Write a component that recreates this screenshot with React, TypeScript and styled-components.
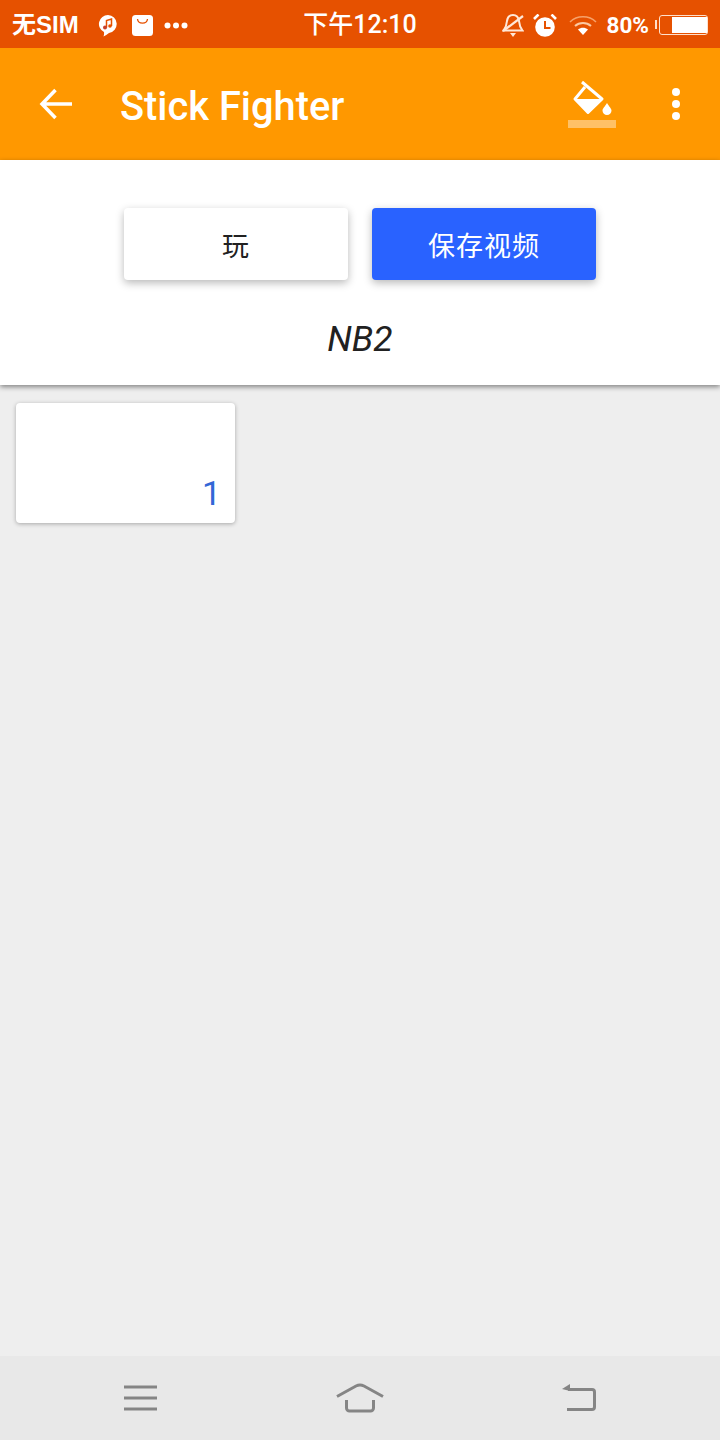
import React from 'react'
import styled, { createGlobalStyle } from 'styled-components'

const Global = createGlobalStyle`
  html, body { margin: 0; padding: 0; }
  body { font-family: Roboto, "Noto Sans CJK SC", sans-serif; }
  * { box-sizing: border-box; }
`

const Page = styled.div`
  width: 720px;
  height: 1440px;
  display: flex;
  flex-direction: column;
  background-color: #eeeeee;
`

const StatusBar = styled.div`
  height: 48px;
  flex: none;
  background-color: #e65100;
  color: #fff;
  display: grid;
  grid-template-columns: 1fr auto 1fr;
  align-items: center;
  padding: 2px 12px 0;
`

const StatusGroup = styled.div<{ $end?: boolean }>`
  display: flex;
  align-items: center;
  justify-content: ${p => (p.$end ? 'flex-end' : 'flex-start')};
`

const Carrier = styled.span`
  font-family: "Liberation Sans", "Noto Sans CJK SC", sans-serif;
  font-size: 24px;
  font-weight: 700;
  line-height: 46px;
  white-space: nowrap;
`

const Percent = styled.span`
  font-size: 22.5px;
  font-weight: 700;
  line-height: 46px;
  margin-left: 10px;
  white-space: nowrap;
`

const Clock = styled.span`
  font-size: 25px;
  font-weight: 500;
  line-height: 46px;
  white-space: nowrap;
`

const StatusIcon = styled.svg<{ $left: number }>`
  display: block;
  flex: none;
  margin-left: ${p => p.$left}px;
`

const Battery = styled.div`
  width: 49px;
  height: 20px;
  margin-left: 10px;
  flex: none;
  border: 1.5px solid #ffe0cc;
  border-radius: 3px;
  padding: 1px 0 1px 12px;
  position: relative;
  &:before {
    content: '';
    position: absolute;
    left: -5px;
    top: 4px;
    width: 2px;
    height: 9px;
    background: #ffe0cc;
  }
`

const BatteryFill = styled.div`
  height: 100%;
  background: #fff;
`

const AppBar = styled.div`
  height: 112px;
  flex: none;
  background-color: #ff9800;
  display: flex;
  align-items: center;
  padding-left: 38px;
  padding-right: 38px;
`

const Title = styled.h1`
  margin: 6px 0 0 46px;
  flex: 1;
  color: #fff;
  font-size: 39.8px;
  font-weight: 500;
  line-height: 1;
`

const BarIcon = styled.svg<{ $left?: number }>`
  display: block;
  flex: none;
  margin-left: ${p => p.$left ?? 0}px;
`

const Header = styled.div`
  height: 225px;
  flex: none;
  background: #fff;
  padding-top: 48px;
  display: flex;
  flex-direction: column;
  align-items: center;
  box-shadow: 0 2px 5px rgba(0, 0, 0, 0.45);
  position: relative;
`

const Buttons = styled.div`
  display: flex;
  gap: 24px;
`

const Button = styled.div<{ $primary?: boolean }>`
  width: 224px;
  height: 72px;
  border-radius: 4px;
  display: flex;
  align-items: center;
  justify-content: center;
  background: ${p => (p.$primary ? '#2962ff' : '#fff')};
  color: ${p => (p.$primary ? '#fff' : '#212121')};
  font-size: 27px;
  letter-spacing: 1px;
  box-shadow: 0 3px 8px rgba(0, 0, 0, 0.28);
`

const Name = styled.div`
  margin-top: 38px;
  font-size: 35.5px;
  font-style: italic;
  line-height: 42px;
  color: #212121;
`

const Grid = styled.div`
  flex: 1;
  padding: 18px 16px;
`

const Card = styled.div`
  width: 219px;
  height: 120px;
  background: #fff;
  border-radius: 4px;
  box-shadow: 0 1px 4px rgba(0, 0, 0, 0.3);
  display: flex;
  align-items: flex-end;
  justify-content: flex-end;
  padding: 0 14px 10px;
`

const CardNumber = styled.span`
  color: #3367d6;
  font-size: 34px;
  line-height: 40px;
`

const NavBar = styled.div`
  height: 84px;
  flex: none;
  background: #e8e8e8;
  display: grid;
  grid-template-columns: repeat(3, 1fr);
  padding: 0 124px;
  align-items: center;
`

const NavSlot = styled.div<{ $align: string }>`
  display: flex;
  justify-content: ${p => p.$align};
`

export default function App() {
  return (
    <Page>
      <Global />
      <StatusBar>
        <StatusGroup>
          <Carrier>无SIM</Carrier>
          <StatusIcon $left={19} width="20" height="23" viewBox="0 0 20 23">
            <path d="M10 1a9 9 0 0 1 1 17.900C9 20.500 7.500 21.500 5.500 22.500c.5-1.500.7-3 .5-4.400A9 9 0 0 1 10 1z" fill="#fff" />
            <path d="M8.500 13.500V6.500l5-1.500v7" fill="none" stroke="#e65100" strokeWidth="1.500" />
            <circle cx="7" cy="13.500" r="2" fill="#c8402a" />
            <circle cx="12" cy="12" r="1.800" fill="#e65100" />
          </StatusIcon>
          <StatusIcon $left={14} width="21" height="21" viewBox="0 0 21 21">
            <rect width="21" height="21" rx="3.500" fill="#fff" />
            <path d="M5.500 4c.5 5.500 9.500 5.500 10 0" fill="none" stroke="#e65100" strokeWidth="1.300" />
          </StatusIcon>
          <StatusIcon $left={11} width="24" height="7" viewBox="0 0 24 7">
            <circle cx="3.500" cy="3.500" r="3" fill="#fff" />
            <circle cx="12" cy="3.500" r="3" fill="#fff" />
            <circle cx="20.500" cy="3.500" r="3" fill="#fff" />
          </StatusIcon>
        </StatusGroup>
        <Clock>下午12:10</Clock>
        <StatusGroup $end>
          <StatusIcon $left={0} width="22" height="24" viewBox="0 0 22 24">
            <path d="M11 2c3.500 0 5.500 2.500 6 6 .3 3.500 1.500 7 3.500 9.500h-19C3.500 15 4.700 11.500 5 8c.5-3.500 2.500-6 6-6z" fill="none" stroke="#ffe8d8" strokeWidth="2" />
            <path d="M8 20h6l-3 4z" fill="#ffe8d8" />
            <path d="M1 18L21 3" stroke="#ffe8d8" strokeWidth="2.200" />
          </StatusIcon>
          <StatusIcon $left={9} width="24" height="23" viewBox="0 0 24 23">
            <circle cx="12" cy="13" r="9.800" fill="#fff" />
            <path d="M12 7v7h5.500" fill="none" stroke="#e65100" strokeWidth="2" />
            <path d="M1 5l4.500-4.500M23 5L18.500.5" stroke="#fff" strokeWidth="2.600" />
          </StatusIcon>
          <StatusIcon $left={12} width="28" height="21" viewBox="0 0 28 21">
            <path d="M1 7c7-7 19-7 26 0" fill="none" stroke="#f6a26a" strokeWidth="1.500" />
            <path d="M6 11c4.500-4 11.500-4 16 0" fill="none" stroke="#fbc9a2" strokeWidth="2" />
            <path d="M9 14.500c3-2.500 7-2.500 10 0L14 20z" fill="#fff" />
          </StatusIcon>
          <Percent>80%</Percent>
          <Battery>
            <BatteryFill />
          </Battery>
        </StatusGroup>
      </StatusBar>
      <AppBar>
        <BarIcon width="36" height="36" viewBox="0 0 36 36">
          <path d="M34 18H5M17.500 4L4 18l13.500 14" fill="none" stroke="#fff" strokeWidth="3.500" />
        </BarIcon>
        <Title>Stick Fighter</Title>
        <BarIcon width="48" height="48" viewBox="0 0 48 48">
          <path d="M14 2l20 17L20 32.500 7 19 17 7" fill="none" stroke="#fff" strokeWidth="3" strokeLinejoin="round" />
          <path d="M7 19h27L20 33z" fill="#fff" />
          <path d="M39 23c-2 3.500-4.500 5.500-4.500 7.500a4.500 4.500 0 0 0 9 0c0-2-2.500-4-4.500-7.500z" fill="#fff" />
          <rect y="40" width="48" height="8" fill="#fff" opacity="0.4" />
        </BarIcon>
        <BarIcon $left={54} width="12" height="36" viewBox="0 0 12 36">
          <circle cx="6" cy="6" r="4" fill="#fff" />
          <circle cx="6" cy="18" r="4" fill="#fff" />
          <circle cx="6" cy="30" r="4" fill="#fff" />
        </BarIcon>
      </AppBar>
      <Header>
        <Buttons>
          <Button>玩</Button>
          <Button $primary>保存视频</Button>
        </Buttons>
        <Name>NB2</Name>
      </Header>
      <Grid>
        <Card>
          <CardNumber>1</CardNumber>
        </Card>
      </Grid>
      <NavBar>
        <NavSlot $align="flex-start">
          <svg width="34" height="26" viewBox="0 0 34 26">
            <path d="M0 2h33M0 13h33M0 24h33" stroke="#858585" strokeWidth="3" />
          </svg>
        </NavSlot>
        <NavSlot $align="center">
          <svg width="48" height="30" viewBox="0 0 48 30">
            <path d="M1 13.500L20 3q4-2 8 0l19 10.500" fill="none" stroke="#858585" strokeWidth="3" />
            <path d="M10.500 17v8a3 3 0 0 0 3 3h21a3 3 0 0 0 3-3v-8" fill="none" stroke="#858585" strokeWidth="3" />
          </svg>
        </NavSlot>
        <NavSlot $align="flex-end">
          <svg width="36" height="28" viewBox="0 0 36 28">
            <path d="M8 5.500h24a2.500 2.500 0 0 1 2.500 2.500v15a2.500 2.500 0 0 1-2.500 2.500H7" fill="none" stroke="#858585" strokeWidth="3" />
            <path d="M2 5l8-5v7z" fill="#858585" />
          </svg>
        </NavSlot>
      </NavBar>
    </Page>
  )
}
